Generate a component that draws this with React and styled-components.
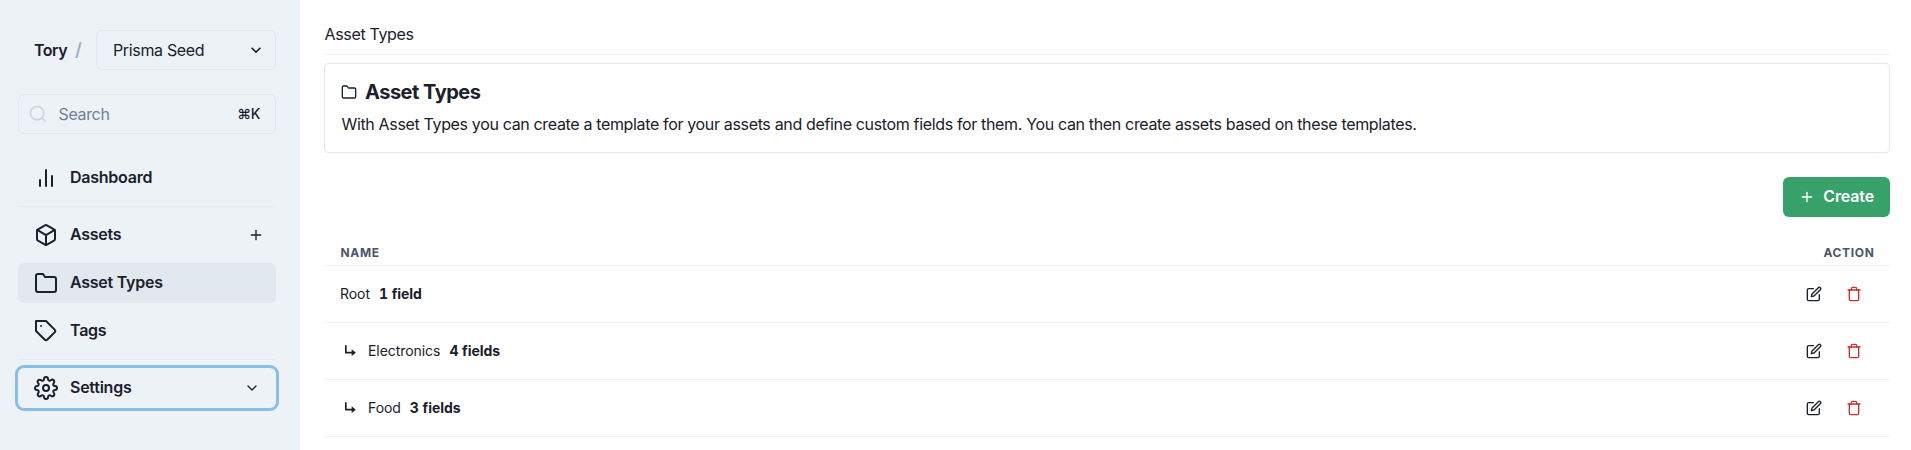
import React from "react";
import styled, { createGlobalStyle, css } from "styled-components";
import {
  FiBarChart2,
  FiBox,
  FiChevronDown,
  FiEdit,
  FiFolder,
  FiPlus,
  FiSearch,
  FiSettings,
  FiTag,
  FiTrash,
} from "react-icons/fi";
import { BiSubdirectoryRight } from "react-icons/bi";

const GlobalStyle = createGlobalStyle`
  *, *::before, *::after { box-sizing: border-box; }
  body {
    margin: 0;
    background: #fff;
    color: #1a202c;
    font-family: Inter, "Liberation Sans", sans-serif;
    font-size: 16px;
    line-height: 24px;
    letter-spacing: -0.345px;
    overflow: hidden;
  }
  button { font: inherit; letter-spacing: inherit; color: inherit; background: none; border: 0; padding: 0; }
  svg { display: block; flex: none; }
`;

const Page = styled.div`
  display: flex;
  height: 100vh;
`;

const Sidebar = styled.aside`
  width: 300px;
  flex: none;
  padding: 30px 24px 0 18px;
  background: #edf2f7;
`;

const BrandRow = styled.div`
  display: flex;
  align-items: center;
  height: 40px;
  padding-left: 16px;
`;

const Brand = styled.span`
  width: 41px;
  padding-bottom: 1px;
  font-weight: 600;
  letter-spacing: -0.5px;
`;

const Slash = styled.span`
  width: 21px;
  color: #a0aec0;
  font-size: 18px;
  font-weight: 600;
`;

const TeamSelect = styled.button`
  && {
    display: flex;
    align-items: center;
    justify-content: space-between;
    width: 180px;
    height: 40px;
    padding: 0 9px 0 16px;
    border: 1px solid #e2e8f0;
    border-radius: 6px;
  }
`;

const SearchBox = styled.div`
  display: flex;
  align-items: center;
  height: 40px;
  margin: 24px 0;
  padding: 0 15px 0 9px;
  border: 1px solid #e2e8f0;
  border-radius: 6px;
  color: #718096;
`;

const SearchLabel = styled.span`
  flex: 1;
  margin-left: 10.5px;
`;

const Shortcut = styled.span`
  color: #1a202c;
  font-size: 14px;
  font-weight: 500;
`;

const Nav = styled.nav`
  display: flex;
  flex-direction: column;
  gap: 8px;
`;

const NavItem = styled.a`
  display: flex;
  align-items: center;
  height: 40px;
  padding: 0 ${(p) => (p.$expandable ? 16 : 12)}px 0 16px;
  border-radius: 6px;
  font-weight: 600;
  letter-spacing: -0.25px;
  ${(p) => p.$active && css`background: #e2e8f0;`}
  ${(p) => p.$focused && css`box-shadow: 0 0 0 3px #88beea;`}
`;

const NavLabel = styled.span`
  flex: 1;
  margin-left: 12px;
  padding-bottom: 2px;
`;

const NavDivider = styled.hr`
  width: 100%;
  height: 1px;
  margin: 0;
  border: 0;
  background: #e5ebf1;
`;

const Main = styled.main`
  flex: 1;
  min-width: 0;
  padding: 0 21px 0 24px;
`;

const Breadcrumb = styled.header`
  height: 55px;
  padding: 22px 0 0 0.5px;
  border-bottom: 1px solid #edf2f7;
`;

const Intro = styled.section`
  height: 90px;
  margin-top: 8px;
  padding: 16px;
  border: 1px solid #e2e8f0;
  border-radius: 4px;
`;

const IntroTitle = styled.h1`
  display: flex;
  align-items: center;
  gap: 8px;
  margin: 0 0 8px;
  font-size: 20px;
  line-height: 24px;
  font-weight: 700;
  letter-spacing: -0.5px;
`;

const IntroText = styled.p`
  margin: 0 0 0 0.5px;
  white-space: nowrap;
`;

const Toolbar = styled.div`
  display: flex;
  justify-content: flex-end;
  padding: 24px 0 0;
`;

const CreateButton = styled.button`
  && {
    display: flex;
    align-items: center;
    justify-content: space-between;
    width: 107px;
    height: 40px;
    padding: 0 16px;
    border-radius: 6px;
    background: #38a169;
    color: #fff;
    font-weight: 600;
    letter-spacing: -0.15px;
  }
`;

const CreateLabel = styled.span`
  padding-bottom: 2px;
`;

const TableHead = styled.div`
  display: flex;
  justify-content: space-between;
  height: 48px;
  margin-top: 1px;
  padding: 27px 15.5px 0 16.5px;
  border-bottom: 1px solid #edf2f7;
  color: #4a5568;
  font-size: 12px;
  line-height: 16px;
  font-weight: 700;
  letter-spacing: 0.65px;
`;

const Row = styled.div`
  display: flex;
  align-items: center;
  height: 57px;
  padding: 0 28px 0 16px;
  border-bottom: 1px solid #edf2f7;
  font-size: 14px;
  line-height: 20px;
  letter-spacing: -0.06px;
  font-variant-numeric: lining-nums tabular-nums;
`;

const Branch = styled.span`
  display: flex;
  width: 28px;
`;

const FieldCount = styled.strong`
  flex: 1;
  margin-left: 9px;
  font-weight: 700;
`;

const Actions = styled.div`
  display: flex;
  gap: 24px;
`;

const IconButton = styled.button`
  && { color: ${(p) => (p.$danger ? "#c53030" : "#1a202c")}; }
`;

function SelectArrow() {
  return (
    <svg width="20" height="20" viewBox="0 0 24 24" fill="currentColor">
      <path d="M16.59 8.59L12 13.17 7.41 8.59 6 10l6 6 6-6z" />
    </svg>
  );
}

const assetTypes = [
  { name: "Root", fields: "1 field" },
  { name: "Electronics", fields: "4 fields", nested: true },
  { name: "Food", fields: "3 fields", nested: true },
];

export default function App() {
  return (
    <>
      <GlobalStyle />
      <Page>
        <Sidebar>
          <BrandRow>
            <Brand>Tory</Brand>
            <Slash>/</Slash>
            <TeamSelect>
              Prisma Seed
              <SelectArrow />
            </TeamSelect>
          </BrandRow>
          <SearchBox>
            <FiSearch size={20} color="#cbd5e0" />
            <SearchLabel>Search</SearchLabel>
            <Shortcut>⌘K</Shortcut>
          </SearchBox>
          <Nav>
            <NavItem>
              <FiBarChart2 size={24} />
              <NavLabel>Dashboard</NavLabel>
            </NavItem>
            <NavDivider />
            <NavItem>
              <FiBox size={24} />
              <NavLabel>Assets</NavLabel>
              <FiPlus size={16} />
            </NavItem>
            <NavItem $active>
              <FiFolder size={24} />
              <NavLabel>Asset Types</NavLabel>
            </NavItem>
            <NavItem>
              <FiTag size={24} />
              <NavLabel>Tags</NavLabel>
            </NavItem>
            <NavDivider />
            <NavItem $focused $expandable>
              <FiSettings size={24} />
              <NavLabel>Settings</NavLabel>
              <FiChevronDown size={16} />
            </NavItem>
          </Nav>
        </Sidebar>
        <Main>
          <Breadcrumb>Asset Types</Breadcrumb>
          <Intro>
            <IntroTitle>
              <FiFolder size={16} />
              Asset Types
            </IntroTitle>
            <IntroText>
              With Asset Types you can create a template for your assets and define custom fields for them. You can
              then create assets based on these templates.
            </IntroText>
          </Intro>
          <Toolbar>
            <CreateButton>
              <FiPlus size={16} />
              <CreateLabel>Create</CreateLabel>
            </CreateButton>
          </Toolbar>
          <TableHead>
            <span>NAME</span>
            <span>ACTION</span>
          </TableHead>
          {assetTypes.map((type) => (
            <Row key={type.name}>
              {type.nested && (
                <Branch>
                  <BiSubdirectoryRight size={20} />
                </Branch>
              )}
              <span>{type.name}</span>
              <FieldCount>{type.fields}</FieldCount>
              <Actions>
                <IconButton aria-label="Edit">
                  <FiEdit size={16} />
                </IconButton>
                <IconButton aria-label="Delete" $danger>
                  <FiTrash size={16} />
                </IconButton>
              </Actions>
            </Row>
          ))}
        </Main>
      </Page>
    </>
  );
}
